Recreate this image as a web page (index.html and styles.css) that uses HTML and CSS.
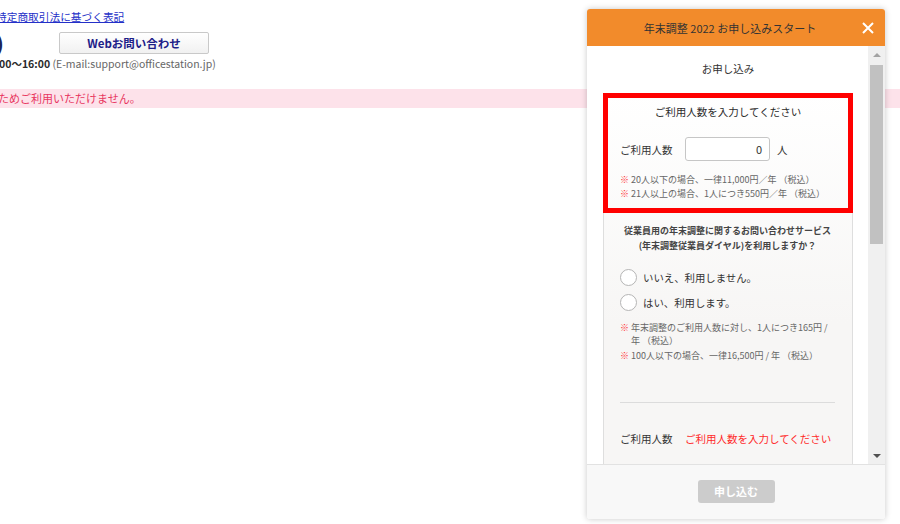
FILE: index.html
```html
<!DOCTYPE html>
<html lang="ja">
<head>
<meta charset="utf-8">
<title>年末調整 2022 お申し込み</title>
<link rel="stylesheet" href="styles.css">
</head>
<body>
<div class="page">
  <div class="link-row"><a href="#" class="law-link">特定商取引法に基づく表記</a></div>
  <div class="contact-row">
    <span class="tel-end">)</span>
    <button class="web-btn">Webお問い合わせ</button>
  </div>
  <div class="hours-row"><b>00～16:00</b> <span class="mail">(E-mail:support@officestation.jp)</span></div>
  <div class="banner">ためご利用いただけません。</div>
</div>

<div class="modal">
  <div class="modal-head">
    <span class="modal-title">年末調整 2022 お申し込みスタート</span>
    <svg class="close" width="12" height="12" viewBox="0 0 12 12"><path d="M1 1L11 11M11 1L1 11" stroke="#fff" stroke-width="2" fill="none"/></svg>
  </div>
  <div class="modal-body">
    <div class="scroll-content">
      <h2 class="section-title">お申し込み</h2>
      <div class="card">
        <section class="highlight">
          <h3 class="hl-title">ご利用人数を入力してください</h3>
          <div class="count-row">
            <span class="count-label">ご利用人数</span>
            <span class="count-input">0</span>
            <span class="count-unit">人</span>
          </div>
          <ul class="notes">
            <li><span class="mark">※</span><span>20人以下の場合、一律11,000円／年 （税込）</span></li>
            <li><span class="mark">※</span><span>21人以上の場合、1人につき550円／年 （税込）</span></li>
          </ul>
        </section>
        <div class="card-rest">
          <p class="question">従業員用の年末調整に関するお問い合わせサービス<br>(年末調整従業員ダイヤル)を利用しますか？</p>
          <div class="radios">
            <label class="radio"><span class="circle"></span><span>いいえ、利用しません。</span></label>
            <label class="radio"><span class="circle"></span><span>はい、利用します。</span></label>
          </div>
          <ul class="notes notes-dial">
            <li><span class="mark">※</span><span>年末調整のご利用人数に対し、1人につき165円 / 年 （税込）</span></li>
            <li><span class="mark">※</span><span>100人以下の場合、一律16,500円 / 年 （税込）</span></li>
          </ul>
          <div class="divider"></div>
          <div class="summary">
            <span class="count-label">ご利用人数</span>
            <span class="error">ご利用人数を入力してください</span>
          </div>
        </div>
      </div>
    </div>
    <div class="scrollbar">
      <div class="sb-btn"><span class="tri-up"></span></div>
      <div class="sb-track"><div class="sb-thumb"></div></div>
      <div class="sb-btn"><span class="tri-down"></span></div>
    </div>
  </div>
  <div class="modal-foot">
    <button class="submit">申し込む</button>
  </div>
</div>
</body>
</html>
```

FILE: styles.css
```css
* { box-sizing: border-box; }
html, body { margin: 0; padding: 0; }
body {
  width: 900px;
  height: 524px;
  overflow: hidden;
  background: #fff;
  font-family: "Noto Sans CJK JP", "Noto Sans", sans-serif;
  color: #2b2b2b;
  position: relative;
}

/* background page */
.page { padding-top: 9px; }
.link-row { margin-left: -4px; height: 16px; line-height: 16px; font-size: 10.7px; }
.law-link { color: #2430c8; text-decoration: underline; }
.contact-row {
  display: flex;
  align-items: center;
  height: 22px;
  margin-top: 7px;
  margin-left: -4px;
}
.tel-end { font-size: 19px; font-weight: 900; color: #1d2457; width: 63px; line-height: 22px; }
.web-btn {
  width: 150px;
  height: 22px;
  padding: 0;
  border: 1px solid #c9c9c9;
  border-radius: 2px;
  background: linear-gradient(#ffffff, #f1f1f1);
  color: #1d2088;
  font-family: inherit;
  font-size: 11.5px;
  font-weight: bold;
  line-height: 20px;
}
.hours-row {
  margin-left: -1px;
  margin-top: 1px;
  font-size: 10.5px;
  line-height: 17px;
  color: #2b2b2b;
}
.hours-row .mail { color: #666; }
.banner {
  margin-top: 17px;
  height: 19px;
  line-height: 19px;
  background: #fde2ea;
  color: #e8365f;
  font-size: 11px;
  margin-left: -2px;
}

/* modal */
.modal {
  position: absolute;
  left: 587px;
  top: 9px;
  width: 298px;
  height: 510px;
  display: flex;
  flex-direction: column;
  background: #fff;
  border-radius: 3px;
  box-shadow: 0 0 6px rgba(0, 0, 0, 0.22);
  overflow: hidden;
}
.modal-head {
  height: 37px;
  flex: none;
  background: #f28b2b;
  display: flex;
  align-items: center;
  justify-content: center;
  padding-right: 12px;
  position: relative;
}
.modal-title {
  font-size: 11px;
  color: #333;
}
.close { position: absolute; right: 11px; top: 13px; }

.modal-body {
  height: 418px;
  flex: none;
  display: flex;
}
.scroll-content {
  flex: 1;
  overflow: hidden;
  padding: 0 15px 0 16px;
}
.section-title {
  margin: 14px 0 15px;
  font-size: 10.5px;
  font-weight: normal;
  line-height: 18px;
  text-align: center;
  color: #333;
}
.card { background: linear-gradient(#ffffff, #f7f6f5 60%); }
.highlight {
  border: 5px solid #ff0000;
  padding: 5px 0 7px 12px;
}
.hl-title {
  margin: 0;
  font-size: 10.5px;
  font-weight: normal;
  line-height: 18px;
  text-align: center;
  padding-right: 12px;
  color: #2b2b2b;
}
.count-row {
  display: flex;
  align-items: center;
  margin-top: 16px;
  height: 24px;
}
.count-label {
  width: 65px;
  font-size: 10.5px;
  color: #333;
}
.count-input {
  width: 85px;
  height: 24px;
  border: 1px solid #c6c6c6;
  border-radius: 3px;
  background: #fff;
  font-size: 11px;
  line-height: 22px;
  text-align: right;
  padding-right: 7px;
  color: #333;
}
.count-unit { margin-left: 7px; font-size: 10.5px; color: #333; }
.notes {
  list-style: none;
  margin: 12px 0 0;
  padding: 0;
  font-size: 9px;
  line-height: 14px;
  color: #666;
}
.notes li { display: flex; }
.notes .mark { color: #ff3333; width: 11px; flex: none; }

.card-rest {
  border-left: 1px solid #dedede;
  border-right: 1px solid #dedede;
  padding: 10px 17px 30px 16px;
}
.question {
  margin: 0;
  font-size: 9px;
  font-weight: bold;
  line-height: 15px;
  text-align: center;
  color: #444;
  white-space: nowrap;
}
.radios { margin-top: 12px; }
.radio {
  display: flex;
  align-items: center;
  height: 25px;
  font-size: 10.4px;
  color: #333;
}
.circle {
  width: 17px;
  height: 17px;
  border: 1px solid #b5b5b5;
  border-radius: 50%;
  background: #fff;
  margin-right: 6px;
}
.notes-dial { margin-top: 6px; line-height: 13px; padding-right: 0; }
.notes-dial li + li { margin-top: 2px; }
.divider { height: 1px; background: #dcdcdc; margin-top: 40px; }
.summary {
  display: flex;
  align-items: center;
  margin-top: 26px;
  height: 18px;
}
.error { color: #ff2a2a; font-size: 10.5px; white-space: nowrap; }

/* fake scrollbar */
.scrollbar {
  width: 17px;
  flex: none;
  background: #f0f0f0;
  display: flex;
  flex-direction: column;
}
.sb-btn {
  height: 17px;
  flex: none;
  display: flex;
  align-items: center;
  justify-content: center;
}
.tri-up {
  width: 0; height: 0;
  border-left: 4px solid transparent;
  border-right: 4px solid transparent;
  border-bottom: 4px solid #a3a3a3;
}
.tri-down {
  width: 0; height: 0;
  border-left: 4px solid transparent;
  border-right: 4px solid transparent;
  border-top: 4px solid #505050;
}
.sb-track { flex: 1; padding: 2px 2px 0; }
.sb-thumb { height: 179px; background: #c1c1c1; }

.modal-foot {
  flex: 1;
  border-top: 1px solid #e2e2e2;
  background: #f8f8f8;
  display: flex;
  justify-content: center;
  align-items: flex-start;
  padding-top: 15px;
}
.submit {
  width: 77px;
  height: 23px;
  padding: 0;
  border: none;
  border-radius: 3px;
  background: #cccccc;
  color: #fff;
  font-family: inherit;
  font-size: 11px;
  font-weight: bold;
  line-height: 23px;
}
```
